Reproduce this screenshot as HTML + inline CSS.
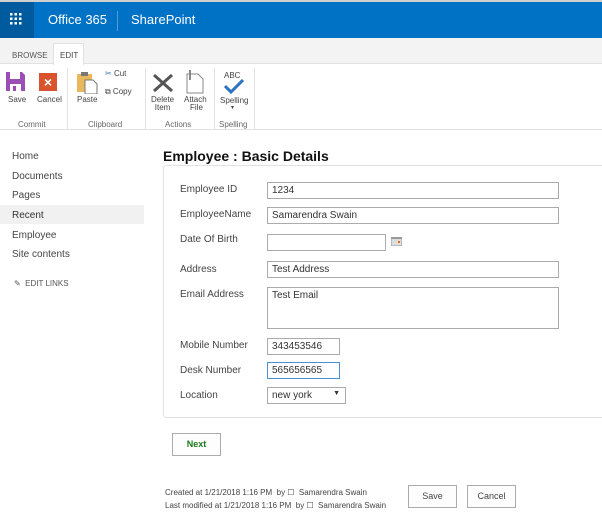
<!DOCTYPE html>
<html><head><meta charset="utf-8"><style>
*{margin:0;padding:0;box-sizing:border-box}
body{width:602px;height:527px;overflow:hidden;background:#fff;font-family:"Liberation Sans",sans-serif;position:relative;color:#444}
.a{position:absolute}
.t{font-size:8px;color:#444;white-space:nowrap}
.nav{font-size:10px;color:#444;position:absolute;left:12px}
.lbl{position:absolute;left:180px;font-size:10px;color:#444}
.in{position:absolute;left:267px;border:1px solid #ababab;height:17px;background:#fff;font-size:10px;color:#333;padding:2px 4px}
.btn{position:absolute;border:1px solid #ababab;background:#fdfdfd;font-size:9px;color:#444;text-align:center}
</style></head><body>
<div class="a" style="left:0;top:0;width:602px;height:2px;background:#d0d0d0"></div>
<div class="a" style="left:0;top:2px;width:602px;height:36px;background:#0072c6"></div>
<div class="a" style="left:0;top:2px;width:34px;height:36px;background:#005a9e"></div>
<svg class="a" style="left:10px;top:13px" width="12" height="12"><g fill="#fff"><rect x="0" y="0" width="2.5" height="2.5"/><rect x="4.5" y="0" width="2.5" height="2.5"/><rect x="9" y="0" width="2.5" height="2.5"/><rect x="0" y="4.5" width="2.5" height="2.5"/><rect x="4.5" y="4.5" width="2.5" height="2.5"/><rect x="9" y="4.5" width="2.5" height="2.5"/><rect x="0" y="9" width="2.5" height="2.5"/><rect x="4.5" y="9" width="2.5" height="2.5"/><rect x="9" y="9" width="2.5" height="2.5"/></g></svg>
<div class="a" style="left:48px;top:12px;color:#fff;font-size:13px">Office 365</div>
<div class="a" style="left:117px;top:11px;width:1px;height:20px;background:#4d9bd8"></div>
<div class="a" style="left:131px;top:12px;color:#fff;font-size:13px">SharePoint</div>
<div class="a" style="left:0;top:38px;width:602px;height:26px;background:#f3f3f3;border-bottom:1px solid #e1e1e1"></div>
<div class="a t" style="left:12px;top:51px;font-size:8px;color:#555">BROWSE</div>
<div class="a" style="left:53px;top:43px;width:31px;height:22px;background:#fff;border:1px solid #e1e1e1;border-bottom:none"></div>
<div class="a t" style="left:60px;top:51px;color:#444">EDIT</div>
<div class="a" style="left:0;top:129px;width:602px;height:1px;background:#e1e1e1"></div>
<!-- ribbon -->
<svg class="a" style="left:6px;top:72px" width="19" height="19"><path d="M0 0H16L19 3V19H0Z" fill="#9b4fb5"/><rect x="4" y="0" width="10" height="7" fill="#fff"/><rect x="4" y="12" width="11" height="7" fill="#fff"/><rect x="7" y="14" width="3" height="5" fill="#9b4fb5"/></svg>
<div class="a t" style="left:8px;top:95px">Save</div>
<div class="a" style="left:39px;top:73px;width:18px;height:18px;background:#d9532c;color:#fff;font-size:14px;font-weight:bold;text-align:center;line-height:18px">×</div>
<div class="a t" style="left:37px;top:95px">Cancel</div>
<div class="a" style="left:67px;top:68px;width:1px;height:62px;background:#e1e1e1"></div>
<svg class="a" style="left:76px;top:70px" width="22" height="24"><rect x="1" y="4" width="15" height="18" fill="#eab85c"/><rect x="5" y="2" width="7" height="4" fill="#777"/><path d="M9 10H17L21 14V24H9Z" fill="#fff" stroke="#777"/></svg>
<div class="a t" style="left:77px;top:95px">Paste</div>
<div class="a t" style="left:105px;top:69px;color:#3c6fb0">✂ <span style="color:#444">Cut</span></div>
<div class="a t" style="left:105px;top:87px">⧉ Copy</div>
<div class="a" style="left:145px;top:68px;width:1px;height:62px;background:#e1e1e1"></div>
<svg class="a" style="left:152px;top:73px" width="22" height="20"><path d="M2 2L20 18M20 2L2 18" stroke="#555" stroke-width="3"/></svg>
<div class="a t" style="left:151px;top:96px;line-height:8px;text-align:center">Delete<br>Item</div>
<svg class="a" style="left:184px;top:68px" width="20" height="26"><path d="M3 6H14L19 11V25H3Z" fill="#fff" stroke="#888"/><path d="M6 2V12" stroke="#888" stroke-width="2"/></svg>
<div class="a t" style="left:184px;top:96px;line-height:8px;text-align:center">Attach<br>&nbsp;File</div>
<div class="a" style="left:214px;top:68px;width:1px;height:62px;background:#e1e1e1"></div>
<div class="a t" style="left:224px;top:71px;font-size:8px">ABC</div>
<svg class="a" style="left:224px;top:79px" width="20" height="15"><path d="M1 7L7 13L19 1" stroke="#2b72c4" stroke-width="3" fill="none"/></svg>
<div class="a t" style="left:220px;top:96px">Spelling</div>
<div class="a t" style="left:231px;top:104px;font-size:6px">▾</div>
<div class="a" style="left:254px;top:68px;width:1px;height:62px;background:#e1e1e1"></div>
<div class="a t" style="left:18px;top:120px;color:#666">Commit</div>
<div class="a t" style="left:88px;top:120px;color:#666">Clipboard</div>
<div class="a t" style="left:165px;top:120px;color:#666">Actions</div>
<div class="a t" style="left:219px;top:120px;color:#666">Spelling</div>
<!-- nav -->
<div class="nav" style="top:151px">Home</div>
<div class="nav" style="top:171px">Documents</div>
<div class="nav" style="top:190px">Pages</div>
<div class="a" style="left:0;top:205px;width:144px;height:19px;background:#f1f1f1"></div>
<div class="nav" style="top:210px;color:#333">Recent</div>
<div class="nav" style="top:230px">Employee</div>
<div class="nav" style="top:249px">Site contents</div>
<div class="a t" style="left:14px;top:279px;color:#555">✎ &nbsp;EDIT LINKS</div>
<!-- form -->
<div class="a" style="left:163px;top:148px;font-size:14px;font-weight:bold;color:#111">Employee : Basic Details</div>
<div class="a" style="left:163px;top:165px;width:450px;height:253px;border:1px solid #e1e1e1;border-radius:3px"></div>
<div class="lbl" style="top:184px">Employee ID</div><div class="in" style="top:182px;width:292px">1234</div>
<div class="lbl" style="top:209px">EmployeeName</div><div class="in" style="top:207px;width:292px">Samarendra Swain</div>
<div class="lbl" style="top:234px">Date Of Birth</div><div class="in" style="top:234px;width:119px"></div>
<svg class="a" style="left:391px;top:237px" width="11" height="9"><rect width="11" height="9" fill="#ddd" stroke="#999"/><rect x="0" y="0" width="11" height="2" fill="#999"/><rect x="7" y="4" width="2" height="2" fill="#e07020"/></svg>
<div class="lbl" style="top:264px">Address</div><div class="in" style="top:261px;width:292px">Test Address</div>
<div class="lbl" style="top:289px">Email Address</div><div class="in" style="top:287px;width:292px;height:42px">Test Email</div>
<div class="lbl" style="top:340px">Mobile Number</div><div class="in" style="top:338px;width:73px">343453546</div>
<div class="lbl" style="top:365px">Desk Number</div><div class="in" style="top:362px;width:73px;border-color:#4a90d9">565656565</div>
<div class="lbl" style="top:390px">Location</div><div class="in" style="top:387px;width:79px;padding-top:2px">new york<span style="position:absolute;right:5px;top:2px;font-size:7px">▼</span></div>
<div class="btn" style="left:172px;top:433px;width:49px;height:23px;line-height:21px;color:#1a7a1a;font-weight:bold">Next</div>
<div class="a t" style="left:165px;top:488px">Created at 1/21/2018 1:16 PM &nbsp;by ☐ &nbsp;Samarendra Swain</div>
<div class="a t" style="left:165px;top:501px">Last modified at 1/21/2018 1:16 PM &nbsp;by ☐ &nbsp;Samarendra Swain</div>
<div class="btn" style="left:408px;top:485px;width:49px;height:23px;line-height:21px">Save</div>
<div class="btn" style="left:467px;top:485px;width:49px;height:23px;line-height:21px">Cancel</div>
</body></html>
